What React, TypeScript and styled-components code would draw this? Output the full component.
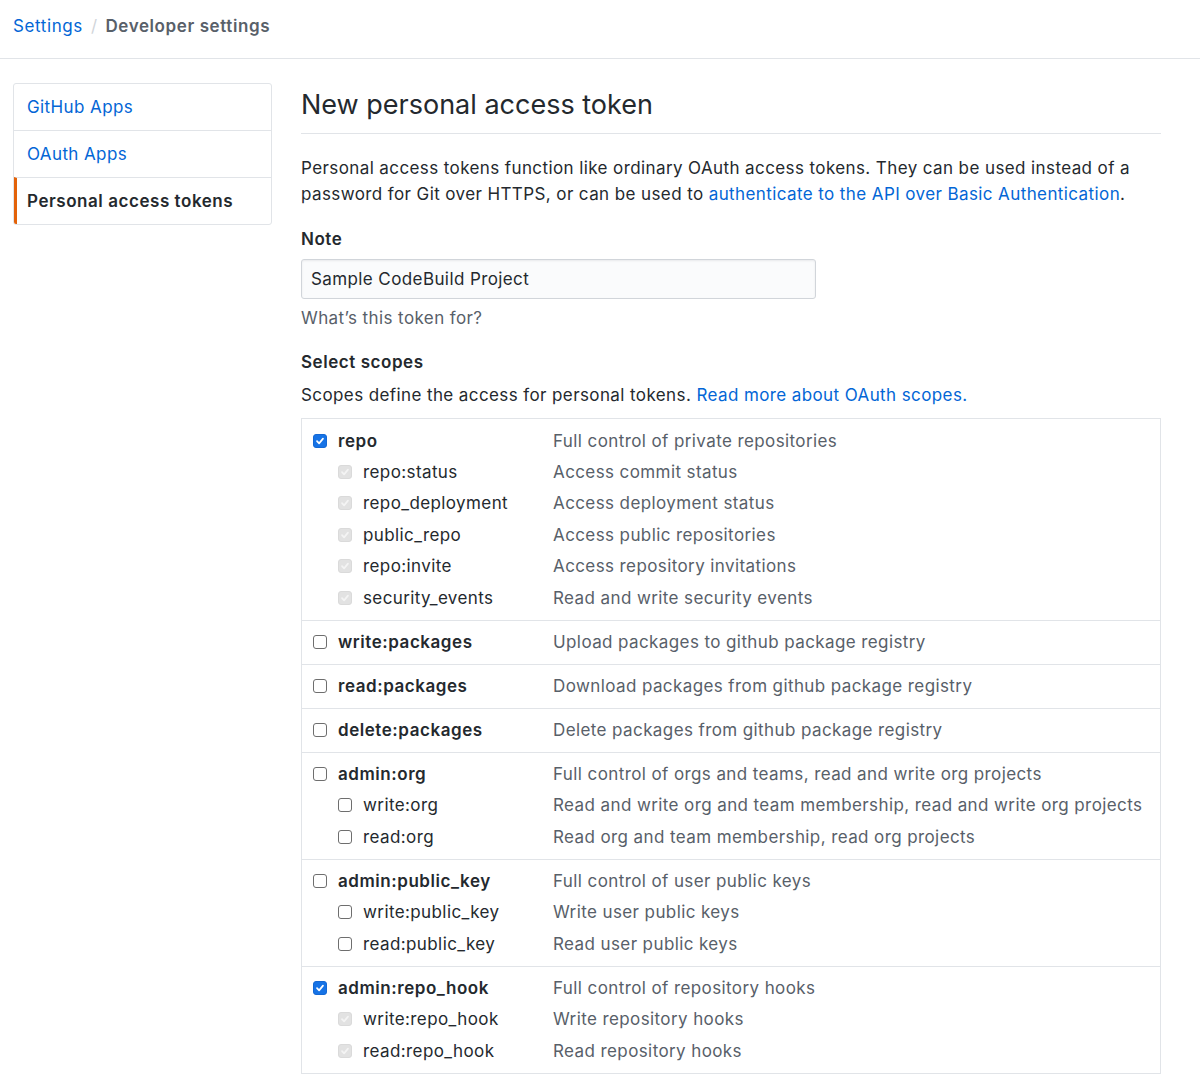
import React from "react";
import styled, { createGlobalStyle, css } from "styled-components";

const GlobalStyle = createGlobalStyle`
  html, body {
    margin: 0;
    padding: 0;
    background: #ffffff;
  }
  body {
    font-family: Inter, "Noto Sans", "Liberation Sans", sans-serif;
    font-size: 17px;
    line-height: 26px;
    letter-spacing: 0.4px;
    color: #24292e;
  }
`;

const Header = styled.header`
  height: 59px;
  padding: 13px 13px 0;
  box-sizing: border-box;
  border-bottom: 1px solid #e1e4e8;
  display: flex;
  align-items: flex-start;
  gap: 8px;
`;

const Crumb = styled.a<{ $current?: boolean }>`
  text-decoration: none;
  letter-spacing: 0.6px;
  color: ${(p) => (p.$current ? "#586069" : "#0366d6")};
  font-weight: ${(p) => (p.$current ? 600 : 400)};
`;

const CrumbDivider = styled.span`
  color: #d1d5da;
`;

const Layout = styled.div`
  display: flex;
  align-items: flex-start;
  gap: 29px;
  padding: 24px 39px 0 13px;
`;

const SideNav = styled.nav`
  width: 259px;
  flex: none;
  border: 1px solid #e1e4e8;
  border-radius: 3px;
  box-sizing: border-box;
  overflow: hidden;
`;

const NavItem = styled.a<{ $selected?: boolean }>`
  display: block;
  padding: 10px 13px;
  text-decoration: none;
  color: #0366d6;
  & + & {
    border-top: 1px solid #e1e4e8;
  }
  ${(p) =>
    p.$selected &&
    css`
      color: #24292e;
      font-weight: 600;
      letter-spacing: 0.55px;
      border-left: 3px solid #e36209;
      padding-left: 10px;
    `}
`;

const Main = styled.main`
  flex: 1;
  min-width: 0;
`;

const Title = styled.h2`
  margin: 0;
  padding: 4px 0 10px;
  font-size: 27px;
  line-height: 36px;
  font-weight: 400;
  letter-spacing: 0;
  border-bottom: 1px solid #e1e4e8;
`;

const Lead = styled.p`
  margin: 21px 0 0;
`;

const Link = styled.a`
  color: #0366d6;
  text-decoration: none;
`;

const FieldLabel = styled.label<{ $gap: number }>`
  display: block;
  margin-top: ${(p) => p.$gap}px;
  font-weight: 600;
  letter-spacing: 0.55px;
`;

const TextInput = styled.input`
  display: block;
  box-sizing: border-box;
  width: 515px;
  height: 40px;
  margin-top: 7px;
  padding: 0 9px;
  font: inherit;
  letter-spacing: 0.4px;
  color: #24292e;
  background: #fafbfc;
  border: 1px solid #d1d5da;
  border-radius: 3px;
  box-shadow: inset 0 1px 2px rgba(27, 31, 35, 0.075);
  outline: none;
`;

const Hint = styled.p`
  margin: 6px 0 0;
  color: #586069;
`;

const Help = styled.p`
  margin: 7px 0 0;
`;

const ScopeTable = styled.div`
  margin-top: 10px;
  border: 1px solid #e1e4e8;
  border-bottom: none;
`;

const ScopeGroup = styled.div`
  padding: 6px 11px;
  border-bottom: 1px solid #e1e4e8;
`;

const ScopeRow = styled.div<{ $child?: boolean }>`
  display: grid;
  grid-template-columns: 240px 1fr;
  height: ${(p) => (p.$child ? 31.5 : 31)}px;
  align-items: center;
  white-space: nowrap;
`;

const ScopeName = styled.label<{ $child?: boolean }>`
  display: flex;
  align-items: center;
  gap: 11px;
  padding-left: ${(p) => (p.$child ? 25 : 0)}px;
  font-weight: ${(p) => (p.$child ? 400 : 600)};
  letter-spacing: ${(p) => (p.$child ? 0.4 : 0.55)}px;
  color: #24292e;
`;

const ScopeDesc = styled.span`
  color: #586069;
`;

type BoxState = "on" | "off" | "locked";

const Box = styled.span<{ $state: BoxState }>`
  width: 14px;
  height: 14px;
  flex: none;
  box-sizing: border-box;
  border-radius: 3px;
  display: inline-flex;
  align-items: center;
  justify-content: center;
  ${(p) =>
    p.$state === "on"
      ? css`
          background: #1673e6;
          border: 1px solid #1468d4;
        `
      : p.$state === "locked"
      ? css`
          background: #e2e2e2;
          border: 1px solid #dadada;
        `
      : css`
          background: #ffffff;
          border: 1px solid #6e6e6e;
        `}
`;

function CheckBox({ state }: { state: BoxState }) {
  return (
    <Box $state={state}>
      {state !== "off" && (
        <svg width="10" height="10" viewBox="0 0 10 10" aria-hidden="true">
          <path
            d="M2 5.2 L4.1 7.4 L8 2.6"
            fill="none"
            stroke={state === "on" ? "#ffffff" : "#f4f4f4"}
            strokeWidth="1.7"
            strokeLinecap="round"
            strokeLinejoin="round"
          />
        </svg>
      )}
    </Box>
  );
}

type Scope = { name: string; desc: string };
type Group = { parent: Scope; checked: boolean; children: Scope[] };

const groups: Group[] = [
  {
    parent: { name: "repo", desc: "Full control of private repositories" },
    checked: true,
    children: [
      { name: "repo:status", desc: "Access commit status" },
      { name: "repo_deployment", desc: "Access deployment status" },
      { name: "public_repo", desc: "Access public repositories" },
      { name: "repo:invite", desc: "Access repository invitations" },
      { name: "security_events", desc: "Read and write security events" },
    ],
  },
  {
    parent: { name: "write:packages", desc: "Upload packages to github package registry" },
    checked: false,
    children: [],
  },
  {
    parent: { name: "read:packages", desc: "Download packages from github package registry" },
    checked: false,
    children: [],
  },
  {
    parent: { name: "delete:packages", desc: "Delete packages from github package registry" },
    checked: false,
    children: [],
  },
  {
    parent: { name: "admin:org", desc: "Full control of orgs and teams, read and write org projects" },
    checked: false,
    children: [
      { name: "write:org", desc: "Read and write org and team membership, read and write org projects" },
      { name: "read:org", desc: "Read org and team membership, read org projects" },
    ],
  },
  {
    parent: { name: "admin:public_key", desc: "Full control of user public keys" },
    checked: false,
    children: [
      { name: "write:public_key", desc: "Write user public keys" },
      { name: "read:public_key", desc: "Read user public keys" },
    ],
  },
  {
    parent: { name: "admin:repo_hook", desc: "Full control of repository hooks" },
    checked: true,
    children: [
      { name: "write:repo_hook", desc: "Write repository hooks" },
      { name: "read:repo_hook", desc: "Read repository hooks" },
    ],
  },
];

export default function App() {
  return (
    <>
      <GlobalStyle />
      <Header>
        <Crumb href="#">Settings</Crumb>
        <CrumbDivider>/</CrumbDivider>
        <Crumb $current>Developer settings</Crumb>
      </Header>
      <Layout>
        <SideNav>
          <NavItem href="#">GitHub Apps</NavItem>
          <NavItem href="#">OAuth Apps</NavItem>
          <NavItem href="#" $selected>
            Personal access tokens
          </NavItem>
        </SideNav>
        <Main>
          <Title>New personal access token</Title>
          <Lead>
            Personal access tokens function like ordinary OAuth access tokens. They can be used
            instead of a password for Git over HTTPS, or can be used to{" "}
            <Link href="#">authenticate to the API over Basic Authentication</Link>.
          </Lead>
          <FieldLabel $gap={19} htmlFor="token-note">
            Note
          </FieldLabel>
          <TextInput id="token-note" defaultValue="Sample CodeBuild Project" />
          <Hint>What’s this token for?</Hint>
          <FieldLabel $gap={18}>Select scopes</FieldLabel>
          <Help>
            Scopes define the access for personal tokens.{" "}
            <Link href="#">Read more about OAuth scopes.</Link>
          </Help>
          <ScopeTable>
            {groups.map((g) => (
              <ScopeGroup key={g.parent.name}>
                <ScopeRow>
                  <ScopeName>
                    <CheckBox state={g.checked ? "on" : "off"} />
                    {g.parent.name}
                  </ScopeName>
                  <ScopeDesc>{g.parent.desc}</ScopeDesc>
                </ScopeRow>
                {g.children.map((c) => (
                  <ScopeRow key={c.name} $child>
                    <ScopeName $child>
                      <CheckBox state={g.checked ? "locked" : "off"} />
                      {c.name}
                    </ScopeName>
                    <ScopeDesc>{c.desc}</ScopeDesc>
                  </ScopeRow>
                ))}
              </ScopeGroup>
            ))}
          </ScopeTable>
        </Main>
      </Layout>
    </>
  );
}
